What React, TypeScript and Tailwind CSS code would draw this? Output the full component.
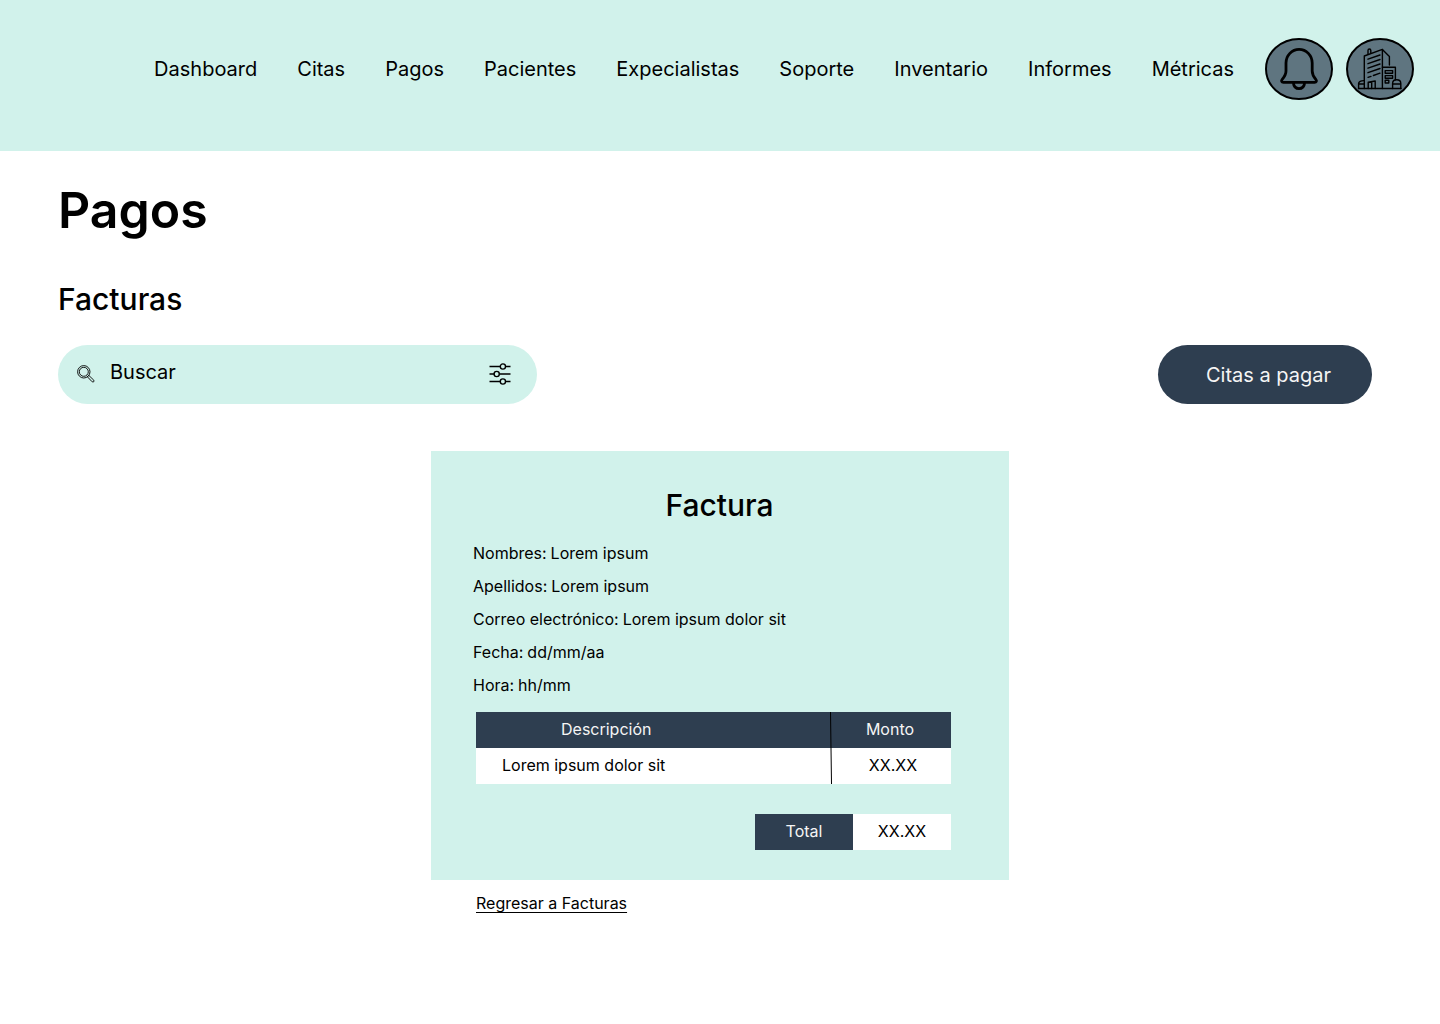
const navItems = [
  'Dashboard',
  'Citas',
  'Pagos',
  'Pacientes',
  'Expecialistas',
  'Soporte',
  'Inventario',
  'Informes',
  'Métricas',
];

const details = [
  ['Nombres', 'Lorem ipsum'],
  ['Apellidos', 'Lorem ipsum'],
  ['Correo electrónico', 'Lorem ipsum dolor sit'],
  ['Fecha', 'dd/mm/aa'],
  ['Hora', 'hh/mm'],
];

function BellBadge() {
  return (
    <svg viewBox="0 0 68 62" className="h-[62px] w-[68px]" fill="none" stroke="#000" aria-hidden="true">
      <ellipse cx="34" cy="31" rx="33" ry="30" fill="#5f7580" strokeWidth="2" />
      <path
        d="M21 25A13.1 13.6 0 0 1 47.2 25V33C47.2 36.6 48.6 38.8 50.8 41.4C52 42.8 51.4 44.3 49.6 44.3H18.4C16.6 44.3 16 42.8 17.2 41.4C19.4 38.8 21 36.6 21 33Z"
        strokeWidth="2.8"
        strokeLinejoin="round"
      />
      <path d="M28.4 45C28.8 48.5 31 50.6 34 50.6C37 50.6 39.2 48.5 39.6 45" strokeWidth="2.8" />
    </svg>
  );
}

function BuildingBadge() {
  return (
    <svg viewBox="0 0 68 62" className="h-[62px] w-[68px]" fill="none" stroke="#000" aria-hidden="true">
      <ellipse cx="34" cy="31" rx="33" ry="30" fill="#5f7580" strokeWidth="2" />
      <g strokeWidth="1.4" strokeLinecap="round" strokeLinejoin="round">
        <path d="M12.5 50.5H55" />
        <path d="M18.3 50.5V18L36.4 11.4V50.5" />
        <path d="M36.4 11.4L43.4 18.6V27" />
        <path d="M22 16.2V12.4C22 10.6 24.8 10.6 24.8 12.4V15.2" />
        <path d="M22 21.2L34 17M22 25.7L34 21.5M22 30.2L34 26M22 34.7L34 30.5M22 39.4L25 38.4M27.4 37.5L34 35.2" />
        <path d="M22.2 50.5V44.3L29.2 43V50.5M25.7 50.5V43.8" />
        <path d="M36.4 29.3H49.4V41.8" />
        <path d="M39.2 32.6H46.6V35.2H39.2ZM39.2 37.6H46.6V40.2H39.2ZM39.2 42.2H42.8V45H39.2Z" />
        <path d="M12.6 50.5V45.5C12.6 43.6 14.8 42.5 18.3 42.6M12.6 46H18.3" />
        <path d="M46.6 50.5V45.4C46.6 40.6 54.8 40.6 54.8 45.4V50.5M46.6 46H54.8" />
      </g>
    </svg>
  );
}

function SearchIcon() {
  return (
    <svg viewBox="0 0 18 18" className="size-[18px] shrink-0" fill="none" stroke="#000" strokeWidth="0.9" aria-hidden="true">
      <circle cx="6.8" cy="6.8" r="6.2" />
      <circle cx="6.8" cy="6.8" r="4.5" />
      <path d="M10.4 11.8L11.8 10.4L16.8 15.2C17.6 16.3 16.4 17.6 15.2 16.8Z" />
    </svg>
  );
}

function FilterIcon() {
  return (
    <svg viewBox="0 0 22 22" className="size-[22px]" fill="none" stroke="#000" strokeWidth="1.4" aria-hidden="true">
      <path d="M0.5 3.5H11M16.5 3.5H21.5M0.5 11H5M10.5 11H21.5M0.5 18.5H11M16.5 18.5H21.5" />
      <circle cx="13.9" cy="3.5" r="2.6" />
      <circle cx="7.7" cy="11" r="2.6" />
      <circle cx="13.9" cy="18.5" r="2.6" />
    </svg>
  );
}

export default function App() {
  return (
    <div className="bg-white font-['Inter',sans-serif] text-black">
      <header className="flex items-start justify-end bg-[#d1f2eb] pt-[38px] pr-[26px] pb-[51px]">
        <nav className="flex h-[62px] items-center gap-10 pr-[31px] text-xl">
          {navItems.map((item) => (
            <a key={item} href="#">
              {item}
            </a>
          ))}
        </nav>
        <div className="flex gap-[13px]">
          <button type="button" aria-label="Notificaciones">
            <BellBadge />
          </button>
          <button type="button" aria-label="Clínica">
            <BuildingBadge />
          </button>
        </div>
      </header>

      <main className="pt-7 pb-24">
        <div className="pr-[68px] pl-[58px]">
          <h1 className="text-[50px] leading-[62px] font-semibold">Pagos</h1>
          <h2 className="mt-10 text-[30px] leading-9 font-medium">Facturas</h2>
          <div className="mt-7 flex items-center justify-between">
            <form className="flex h-[59px] w-[479px] items-center rounded-full bg-[#d1f2eb] pr-[26px] pb-0.5 pl-[19px]" role="search">
              <SearchIcon />
              <input
                type="text"
                aria-label="Buscar"
                placeholder="Buscar"
                className="ml-[15px] min-w-0 flex-1 bg-transparent pb-1 text-xl outline-none placeholder:text-black"
              />
              <button type="button" aria-label="Filtros">
                <FilterIcon />
              </button>
            </form>
            <button type="button" className="h-[59px] rounded-full bg-[#2e3e50] pr-[41px] pl-12 text-xl text-[#f5f5f5]">
              Citas a pagar
            </button>
          </div>
        </div>

        <div className="mx-auto mt-[47px] w-[578px]">
          <section className="bg-[#d1f2eb] pt-9 pr-[58px] pb-[30px] pl-[42px]">
            <h3 className="pl-[15px] text-center text-[30px] leading-9 font-medium">Factura</h3>
            <dl className="mt-3.5 text-base leading-[33px]">
              {details.map(([label, value]) => (
                <div key={label} className="flex gap-1">
                  <dt>{label}:</dt>
                  <dd>{value}</dd>
                </div>
              ))}
            </dl>
            <div className="relative mt-2.5 ml-[3px]">
              <table className="w-full table-fixed text-base">
                <thead>
                  <tr className="h-9 bg-[#2e3e50] text-[#f5f5f5]">
                    <th className="w-[355px] p-0 pb-0.5 pl-[85px] text-left font-normal">Descripción</th>
                    <th className="p-0 pr-0.5 pb-0.5 font-normal">Monto</th>
                  </tr>
                </thead>
                <tbody>
                  <tr className="h-9 bg-white">
                    <td className="p-0 pb-0.5 pl-[26px]">Lorem ipsum dolor sit</td>
                    <td className="p-0 pb-0.5 pl-1 text-center">XX.XX</td>
                  </tr>
                </tbody>
              </table>
              <svg viewBox="0 0 4 72" className="absolute top-0 left-[353px] h-[72px] w-1" stroke="#000" aria-hidden="true">
                <path d="M1.5 0L2.5 72" />
              </svg>
            </div>
            <dl className="mt-[30px] flex justify-end text-center text-base leading-[34px]">
              <dt className="w-[98px] bg-[#2e3e50] pb-0.5 text-[#f5f5f5]">Total</dt>
              <dd className="w-[98px] bg-white pb-0.5">XX.XX</dd>
            </dl>
          </section>
          <a href="#" className="mt-[11px] ml-[45px] inline-block text-base underline underline-offset-3">
            Regresar a Facturas
          </a>
        </div>
      </main>
    </div>
  );
}
